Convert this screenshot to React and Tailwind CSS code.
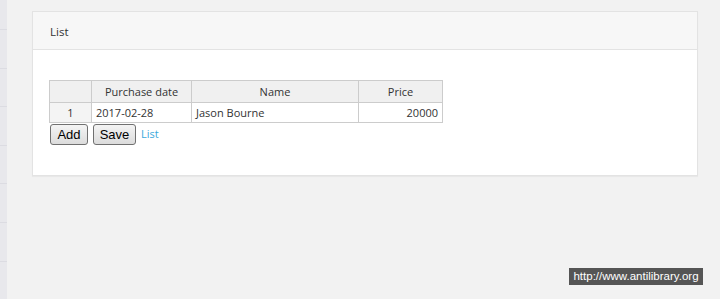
const rows = [{ id: 1, date: "2017-02-28", name: "Jason Bourne", price: 20000 }];

function Sidebar() {
  return (
    <div className="flex w-[7px] flex-col bg-[#e8e8ec]">
      <div className="h-[30px] border-b border-[#dcdce2]" />
      {[0, 1, 2, 3, 4, 5].map((i) => (
        <div key={i} className="h-[38.6px] border-b border-[#dcdce2]" />
      ))}
    </div>
  );
}

export default function App() {
  return (
    <div
      className="relative flex h-[299px] w-[720px] bg-[#f2f2f2] text-[#333]"
      style={{ fontFamily: "'Open Sans', 'Noto Sans', sans-serif" }}
    >
      <Sidebar />
      <div className="flex-1 pl-[25px] pr-[22px] pt-[11px]">
        <div className="border border-[#e3e3e3] bg-white shadow-[0_1px_1px_rgba(0,0,0,0.04)]">
          <div className="flex h-[38px] items-center border-b border-[#e3e3e3] bg-[#f7f7f7] px-[17px] pt-[2px] text-[11.5px]">
            List
          </div>
          <div className="px-[16px] pb-[30px] pt-[30px]">
            <table className="border-collapse text-[11px] leading-none">
              <thead>
                <tr className="h-[22px] bg-[#f0f0f0]">
                  <th className="w-[42px] border border-[#ccc] font-normal" />
                  <th className="w-[100px] border border-[#ccc] font-normal">Purchase date</th>
                  <th className="w-[167px] border border-[#ccc] font-normal">Name</th>
                  <th className="w-[84px] border border-[#ccc] font-normal">Price</th>
                </tr>
              </thead>
              <tbody>
                {rows.map((r) => (
                  <tr key={r.id} className="h-[20px]">
                    <td className="border border-[#ccc] bg-[#f4f4f4] text-center">{r.id}</td>
                    <td className="border border-[#ccc] px-[4px]">{r.date}</td>
                    <td className="border border-[#ccc] px-[4px]">{r.name}</td>
                    <td className="border border-[#ccc] px-[4px] text-right">{r.price}</td>
                  </tr>
                ))}
              </tbody>
            </table>
            <div
              className="mt-[1px] flex items-center text-[13px]"
              style={{ fontFamily: "'Liberation Sans', Arial, sans-serif" }}
            >
              <button className="ml-[1px] h-[21px] w-[38px] rounded-[3px] border border-[#707070] bg-gradient-to-b from-[#f4f4f4] to-[#dcdcdc] text-black">
                Add
              </button>
              <button className="ml-[5px] h-[21px] w-[43px] rounded-[3px] border border-[#707070] bg-gradient-to-b from-[#f4f4f4] to-[#dcdcdc] text-black">
                Save
              </button>
              <a
                href="#"
                className="ml-[5px] text-[11px] text-[#3aa8dc]"
                style={{ fontFamily: "'Open Sans', sans-serif" }}
              >
                List
              </a>
            </div>
          </div>
        </div>
      </div>
      <div
        className="absolute left-[569px] top-[268px] flex h-[17px] w-[134px] items-center justify-center bg-[#555] text-[11.5px] text-white"
        style={{ fontFamily: "'Liberation Sans', Arial, sans-serif" }}
      >
        http://www.antilibrary.org
      </div>
    </div>
  );
}
